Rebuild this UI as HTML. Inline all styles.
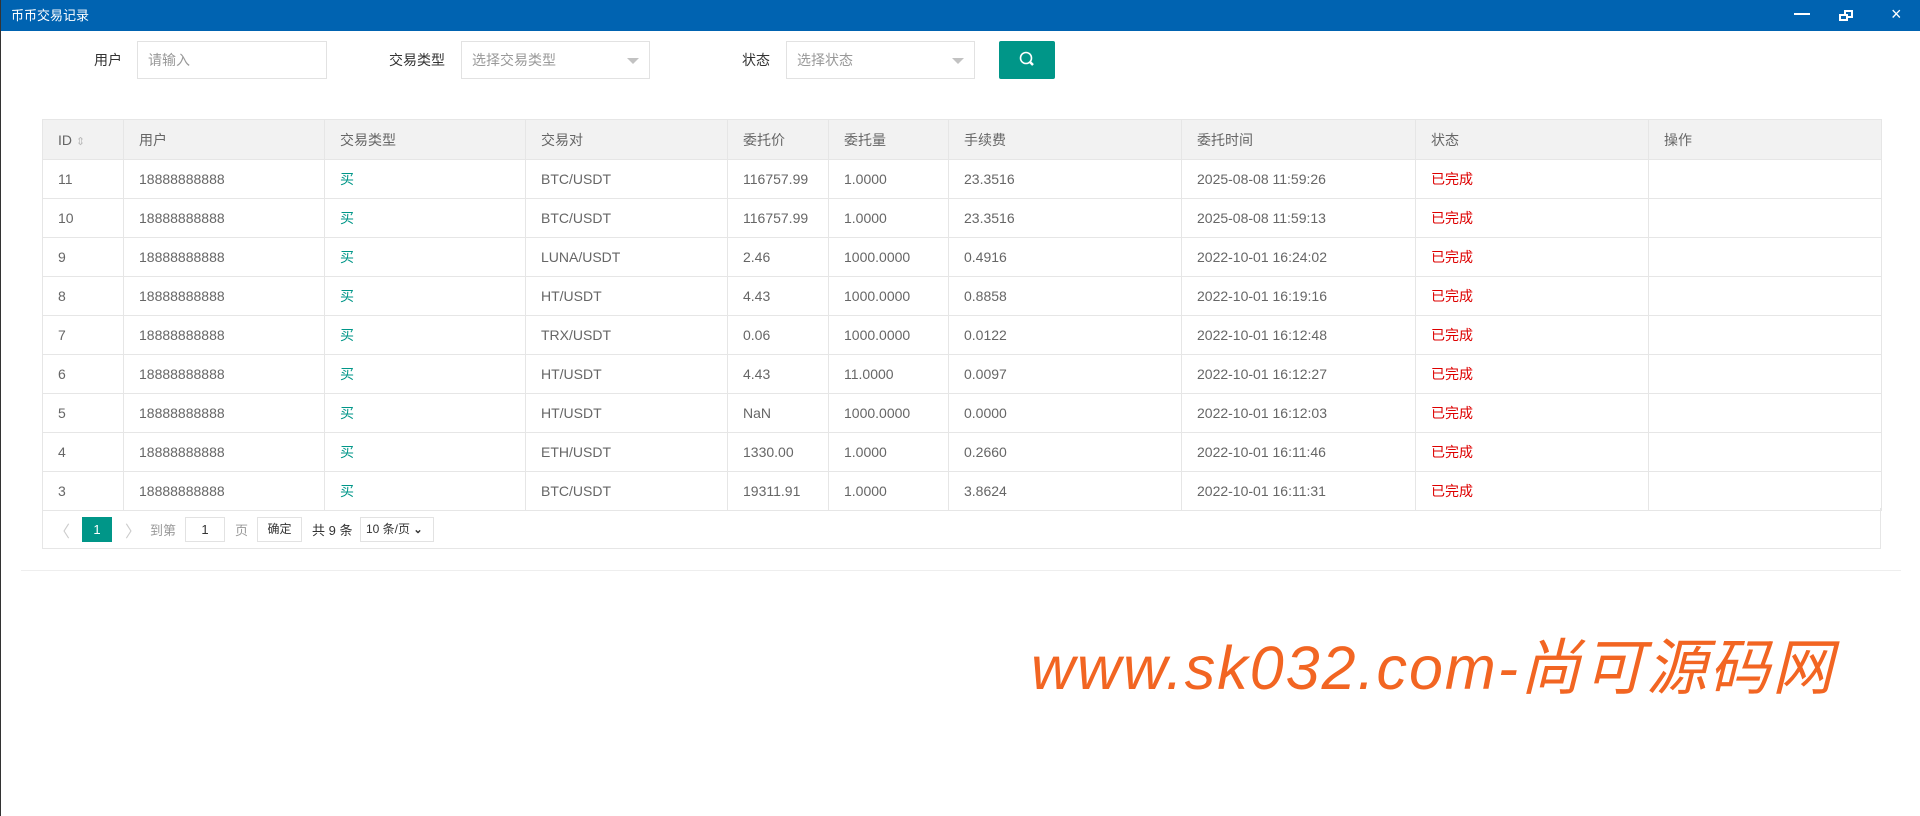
<!DOCTYPE html>
<html><head><meta charset="utf-8"><style>
*{box-sizing:border-box;margin:0;padding:0}
body{width:1920px;height:816px;overflow:hidden;background:#fff;font-family:"Liberation Sans","Noto Sans CJK SC",sans-serif;font-size:14px;color:#666;position:relative;border-left:1px solid #333}
.abs{position:absolute}
.title{left:0;top:0;width:1920px;height:31px;background:#0063b1;color:#fff;font-size:13px;line-height:31px;padding-left:10px}
.lbl{color:#333;font-size:14px;line-height:38px}
.inp{border:1px solid #e2e2e2;height:38px;line-height:36px;padding-left:10px;color:#999;font-size:14px}
.tri{position:absolute;right:10px;top:16px;border:6px solid transparent;border-top:6px solid #c2c2c2}
table{position:absolute;left:41px;top:119px;width:1839px;border-collapse:collapse;table-layout:fixed}
td,th{border:1px solid #e6e6e6;height:39px;padding-left:15px;text-align:left;font-weight:normal;font-size:14px;color:#666;white-space:nowrap}
th{background:#f2f2f2;height:40px}
.g{color:#009688}.r{color:#d00}
.pg{left:41px;top:508px;width:1839px;height:41px;border:1px solid #e6e6e6;border-top:none}
.pg span{position:absolute;top:12px;font-size:13px;color:#666;white-space:nowrap}
</style></head><body>
<div class="abs title">币币交易记录</div>
<div class="abs" style="left:1793px;top:13px;width:16px;height:2px;background:#fff"></div>
<div class="abs" style="left:1843px;top:10px;width:9px;height:8px;border:2px solid #fff"></div>
<div class="abs" style="left:1838px;top:14px;width:9px;height:7px;border:2px solid #fff;background:#0063b1"></div>
<div class="abs" style="left:1890px;top:4px;color:#fff;font-size:18px">×</div>

<div class="abs lbl" style="left:93px;top:41px">用户</div>
<div class="abs inp" style="left:136px;top:41px;width:190px">请输入</div>
<div class="abs lbl" style="left:388px;top:41px">交易类型</div>
<div class="abs inp" style="left:460px;top:41px;width:189px">选择交易类型<i class="tri"></i></div>
<div class="abs lbl" style="left:741px;top:41px">状态</div>
<div class="abs inp" style="left:785px;top:41px;width:189px">选择状态<i class="tri"></i></div>
<div class="abs" style="left:998px;top:41px;width:56px;height:38px;background:#009688;border-radius:2px">
<svg width="56" height="38"><circle cx="27" cy="17" r="5.5" fill="none" stroke="#fff" stroke-width="1.6"/><line x1="31" y1="21" x2="34" y2="24" stroke="#fff" stroke-width="2.5"/></svg></div>

<table>
<colgroup><col style="width:81px"><col style="width:201px"><col style="width:201px"><col style="width:202px"><col style="width:101px"><col style="width:120px"><col style="width:233px"><col style="width:234px"><col style="width:233px"><col style="width:233px"></colgroup>
<tr><th>ID <span style="color:#bbb;font-size:11px">⇕</span></th><th>用户</th><th>交易类型</th><th>交易对</th><th>委托价</th><th>委托量</th><th>手续费</th><th>委托时间</th><th>状态</th><th>操作</th></tr>
<tr><td>11</td><td>18888888888</td><td class="g">买</td><td>BTC/USDT</td><td>116757.99</td><td>1.0000</td><td>23.3516</td><td>2025-08-08 11:59:26</td><td class="r">已完成</td><td></td></tr>
<tr><td>10</td><td>18888888888</td><td class="g">买</td><td>BTC/USDT</td><td>116757.99</td><td>1.0000</td><td>23.3516</td><td>2025-08-08 11:59:13</td><td class="r">已完成</td><td></td></tr>
<tr><td>9</td><td>18888888888</td><td class="g">买</td><td>LUNA/USDT</td><td>2.46</td><td>1000.0000</td><td>0.4916</td><td>2022-10-01 16:24:02</td><td class="r">已完成</td><td></td></tr>
<tr><td>8</td><td>18888888888</td><td class="g">买</td><td>HT/USDT</td><td>4.43</td><td>1000.0000</td><td>0.8858</td><td>2022-10-01 16:19:16</td><td class="r">已完成</td><td></td></tr>
<tr><td>7</td><td>18888888888</td><td class="g">买</td><td>TRX/USDT</td><td>0.06</td><td>1000.0000</td><td>0.0122</td><td>2022-10-01 16:12:48</td><td class="r">已完成</td><td></td></tr>
<tr><td>6</td><td>18888888888</td><td class="g">买</td><td>HT/USDT</td><td>4.43</td><td>11.0000</td><td>0.0097</td><td>2022-10-01 16:12:27</td><td class="r">已完成</td><td></td></tr>
<tr><td>5</td><td>18888888888</td><td class="g">买</td><td>HT/USDT</td><td>NaN</td><td>1000.0000</td><td>0.0000</td><td>2022-10-01 16:12:03</td><td class="r">已完成</td><td></td></tr>
<tr><td>4</td><td>18888888888</td><td class="g">买</td><td>ETH/USDT</td><td>1330.00</td><td>1.0000</td><td>0.2660</td><td>2022-10-01 16:11:46</td><td class="r">已完成</td><td></td></tr>
<tr><td>3</td><td>18888888888</td><td class="g">买</td><td>BTC/USDT</td><td>19311.91</td><td>1.0000</td><td>3.8624</td><td>2022-10-01 16:11:31</td><td class="r">已完成</td><td></td></tr>
</table>
<div class="abs pg">
<span style="left:11px;color:#ccc;font-size:16px;top:10px">〈</span>
<div class="abs" style="left:39px;top:9px;width:30px;height:25px;background:#009688;color:#fff;font-size:13px;text-align:center;line-height:25px">1</div>
<span style="left:82px;color:#ccc;font-size:16px;top:10px">〉</span>
<span style="left:107px;color:#999">到第</span>
<div class="abs" style="left:142px;top:9px;width:40px;height:25px;border:1px solid #e2e2e2;text-align:center;line-height:23px;font-size:13px;color:#333">1</div>
<span style="left:192px;color:#999">页</span>
<div class="abs" style="left:214px;top:9px;width:45px;height:25px;border:1px solid #e2e2e2;text-align:center;line-height:23px;font-size:12px;color:#333">确定</div>
<span style="left:269px;color:#333">共 9 条</span>
<div class="abs" style="left:317px;top:9px;width:74px;height:25px;border:1px solid #e2e2e2;line-height:23px;font-size:12px;color:#333;padding-left:5px;white-space:nowrap">10 条/页 <b style="font-size:11px">⌄</b></div>
</div>
<div class="abs" style="left:20px;top:570px;width:1880px;height:1px;background:#eee"></div>
<div class="abs" style="left:1030px;top:628px;font-size:61px;font-style:italic;color:#f26522;letter-spacing:2px;white-space:nowrap;line-height:80px">www.sk032.com-尚可源码网</div>
</body></html>
